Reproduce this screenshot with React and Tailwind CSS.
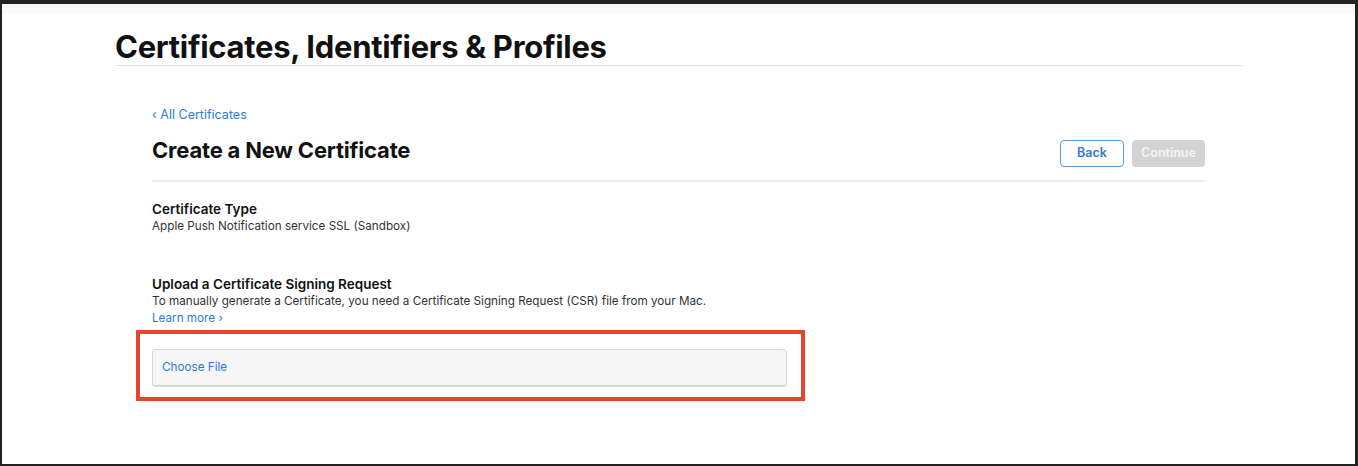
import React from 'react';

export default function App() {
  return (
    <div
      className="w-[1358px] h-[466px] bg-[#232323] pt-[4px] pl-[2px] pr-[3px] pb-[2px]"
      style={{ fontFamily: 'Inter, "Liberation Sans", sans-serif' }}
    >
      <div className="h-full bg-white flex flex-col">
        <div className="h-[9px] bg-[#f9f9f9]" />
        <div className="ml-[113px] w-[1127px]">
          <h1 className="text-[31px] leading-none font-bold tracking-[-0.3px] text-[#111] pt-[18px] pb-[3px]">
            Certificates, Identifiers &amp; Profiles
          </h1>
          <div className="h-px bg-[#e3e3e3]" />

          <div className="mx-[37px] pt-[41px]">
            <a className="block text-[12.5px] leading-[16px] text-[#2f7bd6]">‹ All Certificates</a>
            <div className="flex items-end justify-between mt-[12px] pb-[12px] border-b-2 border-[#ececec]">
              <h2 className="text-[22px] leading-[30px] font-bold tracking-[-0.2px] text-[#111] mb-[3px]">
                Create a New Certificate
              </h2>
              <div className="flex gap-[8px] mb-[1px]">
                <button className="w-[64px] h-[27px] rounded-[4px] border border-[#5b9ae0] text-[12.5px] font-semibold text-[#2f7bd6] bg-white">
                  Back
                </button>
                <button className="w-[73px] h-[27px] rounded-[4px] bg-[#d3d3d3] text-[12.5px] font-semibold text-[#f4f4f4]">
                  Continue
                </button>
              </div>
            </div>

            <div className="mt-[18px]">
              <div className="text-[13.5px] leading-[18px] font-semibold text-[#111]">Certificate Type</div>
              <div className="text-[11.7px] leading-[16px] text-[#333]">Apple Push Notification service SSL (Sandbox)</div>
            </div>

            <div className="mt-[41px]">
              <div className="text-[13.5px] leading-[18px] font-semibold text-[#111]">
                Upload a Certificate Signing Request
              </div>
              <div className="text-[11.7px] leading-[16px] text-[#333]">
                To manually generate a Certificate, you need a Certificate Signing Request (CSR) file from your Mac.
              </div>
              <a className="block text-[11.7px] leading-[18px] text-[#2f7bd6]">Learn more ›</a>
            </div>
          </div>

          <div className="ml-[21px] mt-[3px] w-[669px] h-[71px] border-[4px] border-[#e8442b] pt-[15px] pl-[12px] pr-[14px]">
            <div className="h-[38px] rounded-[4px] border border-[#d6d6d6] border-b-2 bg-[#f5f6f5] flex items-center pl-[9px] text-[11.7px] text-[#2f7bd6]">
              Choose File
            </div>
          </div>
        </div>
      </div>
    </div>
  );
}
